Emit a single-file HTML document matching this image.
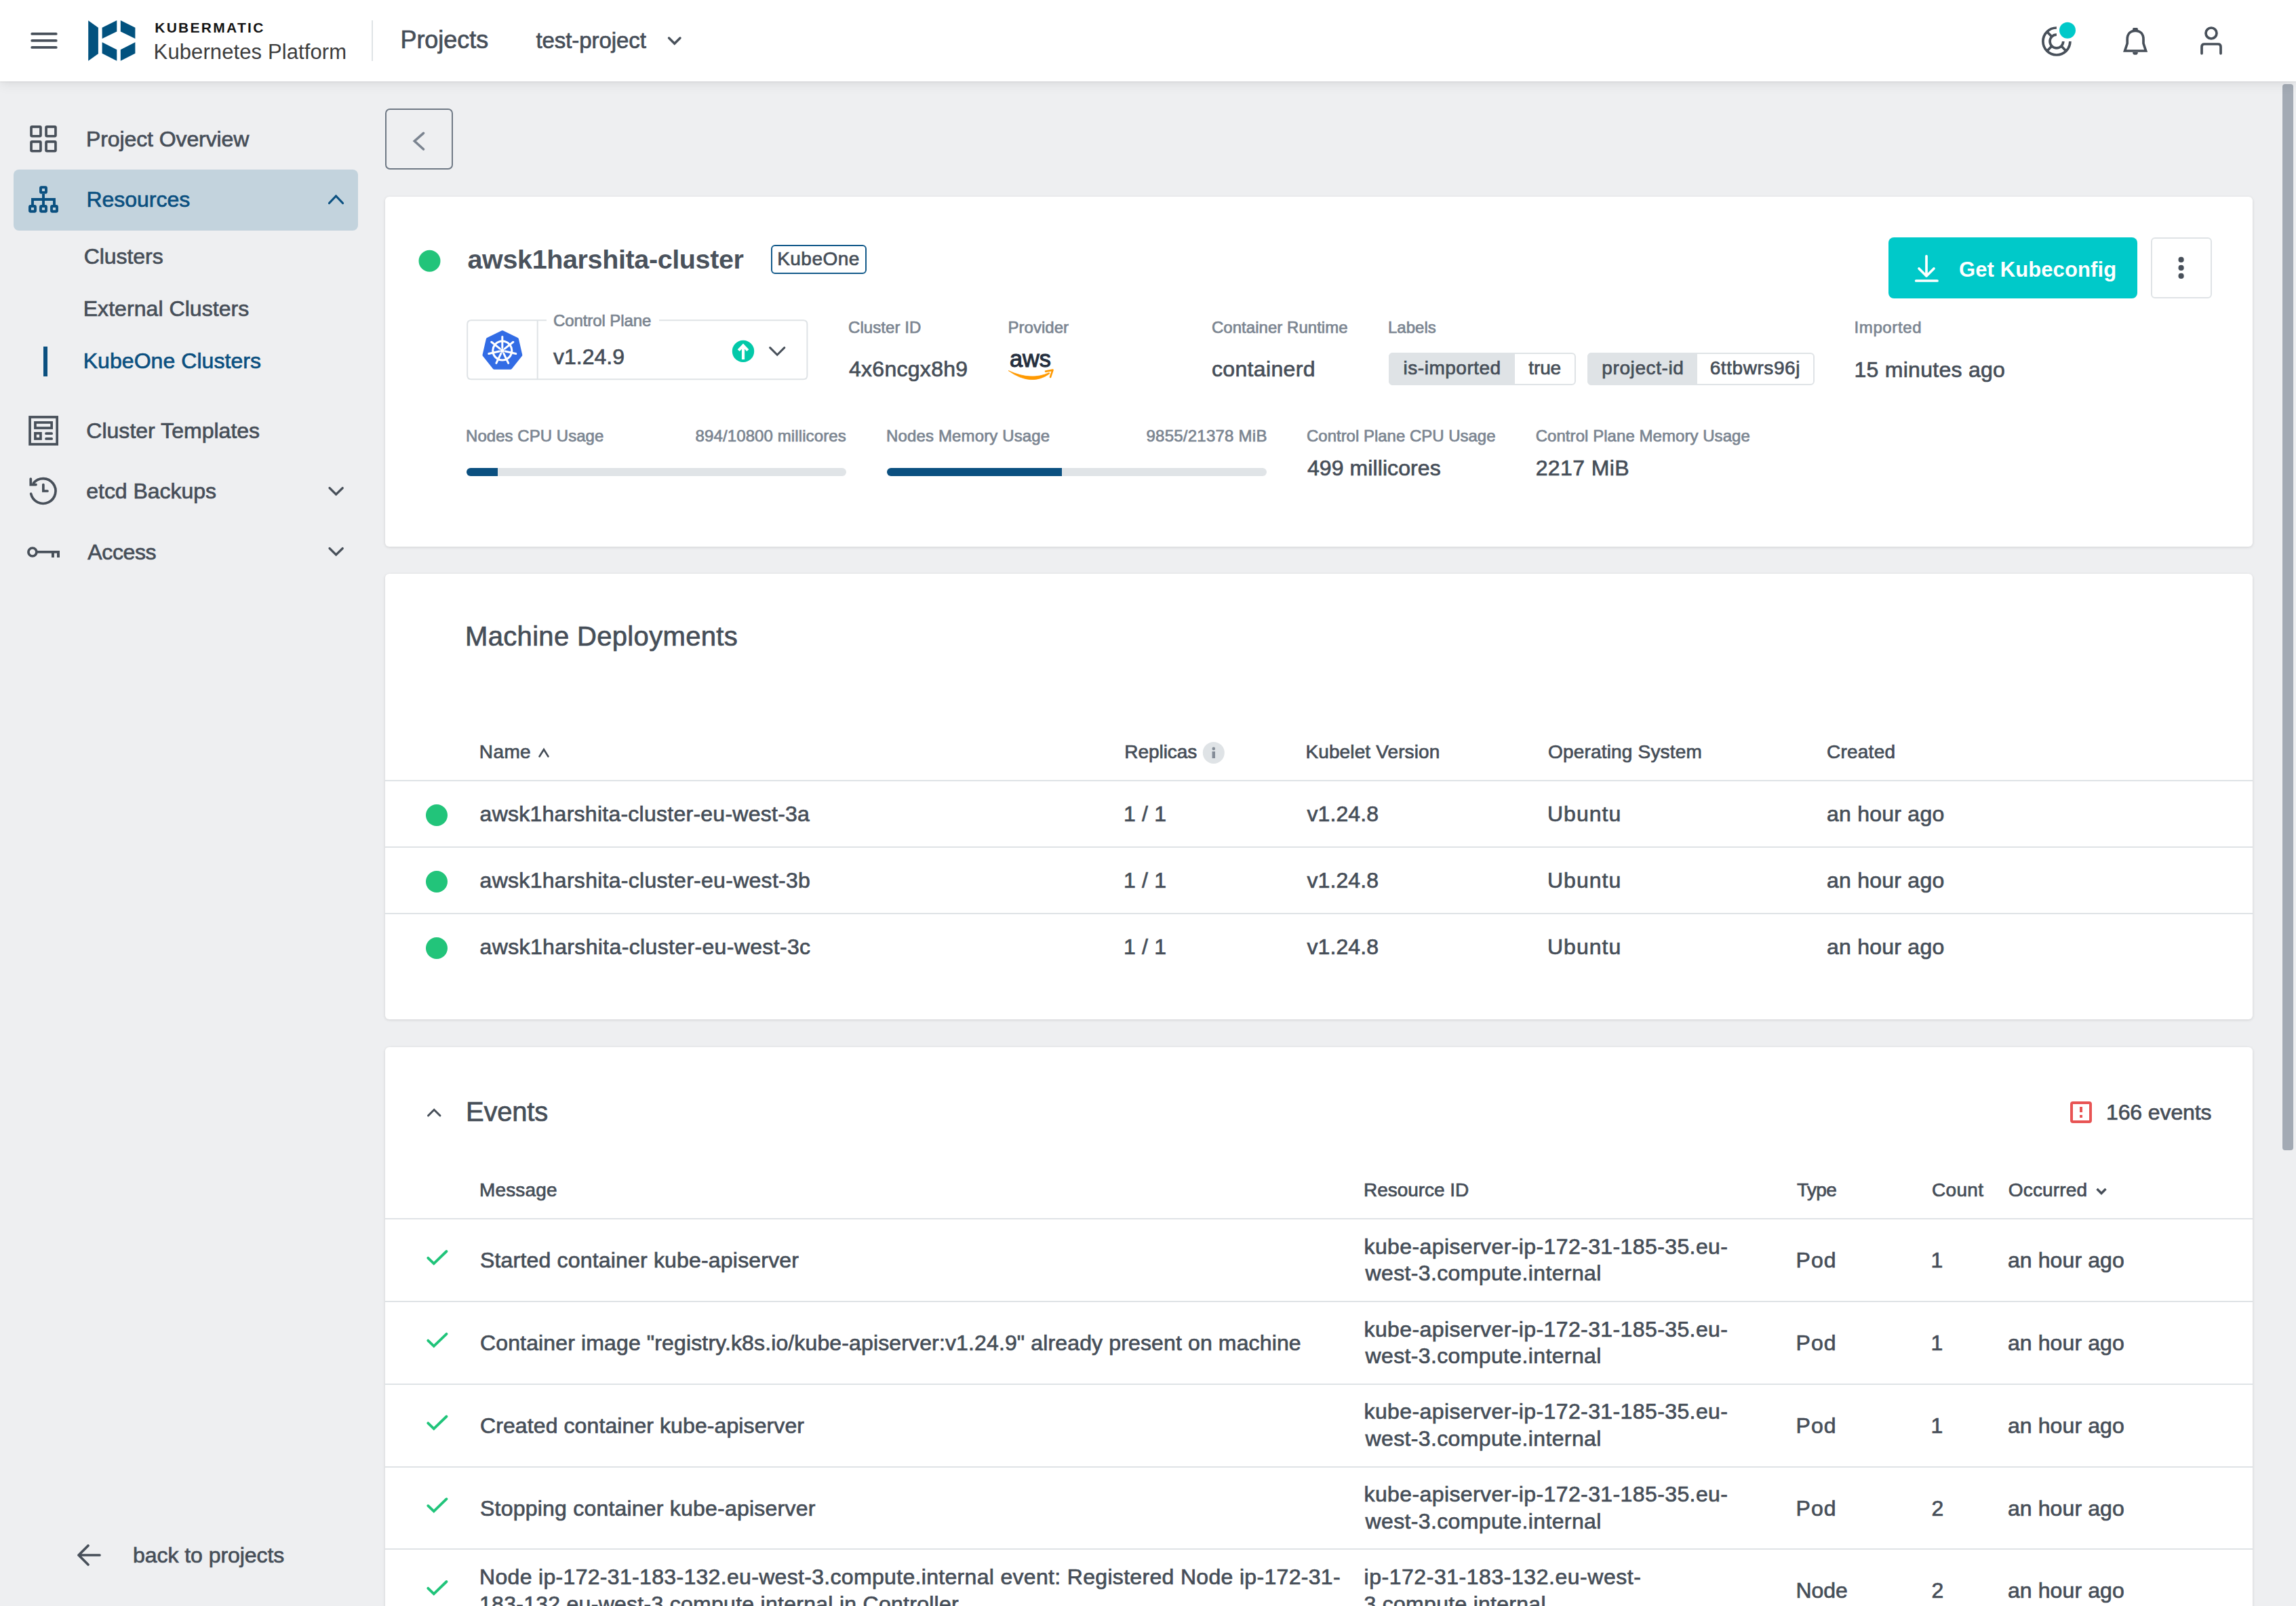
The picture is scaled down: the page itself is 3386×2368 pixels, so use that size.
<!DOCTYPE html>
<html><head><meta charset="utf-8"><title>KubeOne Cluster</title>
<style>
html,body{margin:0;padding:0;width:3386px;height:2368px;overflow:hidden;background:#eeeff1;font-family:"Liberation Sans",sans-serif;position:relative}
.t{position:absolute;white-space:nowrap;z-index:3}
svg.ov{position:absolute;left:0;top:0;z-index:4}
</style></head><body>
<div style="position:absolute;left:0px;top:0px;width:3386px;height:120px;background:#fff;box-shadow:0 1px 2px rgba(0,0,0,0.06), 0 4px 16px rgba(0,0,0,0.085);z-index:2"></div>
<div style="position:absolute;left:3366px;top:124px;width:16px;height:1572px;background:#a3aab4;border-radius:4px"></div>
<div style="position:absolute;left:20px;top:250px;width:508px;height:90px;background:#c3d3dd;border-radius:8px"></div>
<div style="position:absolute;left:64px;top:511px;width:6px;height:44px;background:#0b5080"></div>
<div style="position:absolute;left:568px;top:160px;width:100px;height:90px;border:2px solid #6f7985;border-radius:7px;box-sizing:border-box"></div>
<div style="position:absolute;left:568px;top:290px;width:2754px;height:516px;background:#fff;border-radius:6px;box-shadow:0 1px 4px rgba(0,0,0,0.13)"></div>
<div style="position:absolute;left:1137px;top:361px;width:141px;height:43px;border:2.4px solid #135a8a;border-radius:6px;box-sizing:border-box"></div>
<div style="position:absolute;left:2785px;top:350px;width:367px;height:90px;background:#00c9c9;border-radius:8px"></div>
<div style="position:absolute;left:3172px;top:350px;width:90px;height:90px;border:2px solid #dfe3e6;border-radius:6px;box-sizing:border-box"></div>
<div style="position:absolute;left:2048px;top:520px;width:276px;height:48px;border:2px solid #dfe3e6;border-radius:6px;box-sizing:border-box;overflow:hidden"></div>
<div style="position:absolute;left:2048px;top:520px;width:186px;height:48px;background:#dfe3e6;border-radius:6px 0 0 6px"></div>
<div style="position:absolute;left:2341px;top:520px;width:335px;height:48px;border:2px solid #dfe3e6;border-radius:6px;box-sizing:border-box;overflow:hidden"></div>
<div style="position:absolute;left:2341px;top:520px;width:162px;height:48px;background:#dfe3e6;border-radius:6px 0 0 6px"></div>
<div style="position:absolute;left:688px;top:690px;width:560px;height:12px;background:#e0e4e7;border-radius:6px;overflow:hidden"></div>
<div style="position:absolute;left:688px;top:690px;width:46px;height:12px;background:#0b5080;border-radius:6px 0 0 6px"></div>
<div style="position:absolute;left:1308px;top:690px;width:560px;height:12px;background:#e0e4e7;border-radius:6px"></div>
<div style="position:absolute;left:1308px;top:690px;width:258px;height:12px;background:#0b5080;border-radius:6px 0 0 6px"></div>
<div style="position:absolute;left:568px;top:846px;width:2754px;height:657px;background:#fff;border-radius:6px;box-shadow:0 1px 4px rgba(0,0,0,0.13)"></div>
<div style="position:absolute;left:568px;top:1150px;width:2754px;height:2px;background:#dfe3e6"></div>
<div style="position:absolute;left:568px;top:1248px;width:2754px;height:2px;background:#dfe3e6"></div>
<div style="position:absolute;left:568px;top:1346px;width:2754px;height:2px;background:#dfe3e6"></div>
<div style="position:absolute;left:568px;top:1544px;width:2754px;height:876px;background:#fff;border-radius:6px;box-shadow:0 1px 4px rgba(0,0,0,0.13)"></div>
<div style="position:absolute;left:568px;top:1796px;width:2754px;height:2px;background:#dfe3e6"></div>
<div style="position:absolute;left:568px;top:1918px;width:2754px;height:2px;background:#dfe3e6"></div>
<div style="position:absolute;left:568px;top:2040px;width:2754px;height:2px;background:#dfe3e6"></div>
<div style="position:absolute;left:568px;top:2162px;width:2754px;height:2px;background:#dfe3e6"></div>
<div style="position:absolute;left:568px;top:2283px;width:2754px;height:2px;background:#dfe3e6"></div>
<div class="t" style="left:228.2px;top:30px;font-size:21px;line-height:21px;color:#141414;font-weight:700;letter-spacing:2.289px;-webkit-text-stroke:0 #141414;">KUBERMATIC</div>
<div class="t" style="left:226.6px;top:61px;font-size:31px;line-height:31px;color:#3c3c3c;font-weight:400;letter-spacing:0.106px;-webkit-text-stroke:0 #3c3c3c;">Kubernetes Platform</div>
<div class="t" style="left:590.4px;top:41px;font-size:36px;line-height:36px;color:#464e58;font-weight:400;letter-spacing:-0.014px;-webkit-text-stroke:0.7px #464e58;">Projects</div>
<div class="t" style="left:790.4px;top:43px;font-size:33px;line-height:33px;color:#464e58;font-weight:400;letter-spacing:-0.064px;-webkit-text-stroke:0.7px #464e58;">test-project</div>
<div class="t" style="left:127.0px;top:189px;font-size:32px;line-height:32px;color:#464e58;font-weight:400;letter-spacing:-0.100px;-webkit-text-stroke:0.7px #464e58;">Project Overview</div>
<div class="t" style="left:127.5px;top:278px;font-size:32px;line-height:32px;color:#0b5080;font-weight:400;letter-spacing:-0.038px;-webkit-text-stroke:0.7px #0b5080;">Resources</div>
<div class="t" style="left:123.7px;top:362px;font-size:32px;line-height:32px;color:#464e58;font-weight:400;letter-spacing:-0.057px;-webkit-text-stroke:0.7px #464e58;">Clusters</div>
<div class="t" style="left:122.7px;top:439px;font-size:32px;line-height:32px;color:#464e58;font-weight:400;letter-spacing:0.062px;-webkit-text-stroke:0.7px #464e58;">External Clusters</div>
<div class="t" style="left:122.7px;top:516px;font-size:32px;line-height:32px;color:#0b5080;font-weight:400;letter-spacing:0.060px;-webkit-text-stroke:0.7px #0b5080;">KubeOne Clusters</div>
<div class="t" style="left:127.3px;top:619px;font-size:32px;line-height:32px;color:#464e58;font-weight:400;letter-spacing:0.019px;-webkit-text-stroke:0.7px #464e58;">Cluster Templates</div>
<div class="t" style="left:127.3px;top:708px;font-size:32px;line-height:32px;color:#464e58;font-weight:400;letter-spacing:-0.045px;-webkit-text-stroke:0.7px #464e58;">etcd Backups</div>
<div class="t" style="left:129.3px;top:798px;font-size:32px;line-height:32px;color:#464e58;font-weight:400;letter-spacing:-0.380px;-webkit-text-stroke:0.7px #464e58;">Access</div>
<div class="t" style="left:196.0px;top:2277px;font-size:32px;line-height:32px;color:#464e58;font-weight:400;letter-spacing:-0.053px;-webkit-text-stroke:0.7px #464e58;">back to projects</div>
<div class="t" style="left:689.5px;top:363px;font-size:39.5px;line-height:39.5px;color:#4a525c;font-weight:700;letter-spacing:-0.375px;-webkit-text-stroke:0 #4a525c;">awsk1harshita-cluster</div>
<div class="t" style="left:1146.2px;top:368px;font-size:28px;line-height:28px;color:#464e58;font-weight:400;letter-spacing:0.467px;-webkit-text-stroke:0.7px #464e58;">KubeOne</div>
<div class="t" style="left:2889.0px;top:382px;font-size:31px;line-height:31px;color:#fff;font-weight:700;letter-spacing:0.100px;-webkit-text-stroke:0 #fff;">Get Kubeconfig</div>
<div class="t" style="left:816.0px;top:461px;font-size:24px;line-height:24px;color:#7b8591;font-weight:400;letter-spacing:-0.083px;-webkit-text-stroke:0.7px #7b8591;">Control Plane</div>
<div class="t" style="left:816.0px;top:510px;font-size:32px;line-height:32px;color:#464e58;font-weight:400;letter-spacing:0.000px;-webkit-text-stroke:0.7px #464e58;">v1.24.9</div>
<div class="t" style="left:1251.0px;top:471px;font-size:24px;line-height:24px;color:#7b8591;font-weight:400;letter-spacing:0.078px;-webkit-text-stroke:0.7px #7b8591;">Cluster ID</div>
<div class="t" style="left:1252.0px;top:528px;font-size:32px;line-height:32px;color:#464e58;font-weight:400;letter-spacing:0.278px;-webkit-text-stroke:0.7px #464e58;">4x6ncgx8h9</div>
<div class="t" style="left:1486.5px;top:471px;font-size:24px;line-height:24px;color:#7b8591;font-weight:400;letter-spacing:0.029px;-webkit-text-stroke:0.7px #7b8591;">Provider</div>
<div class="t" style="left:1787.0px;top:471px;font-size:24px;line-height:24px;color:#7b8591;font-weight:400;letter-spacing:0.031px;-webkit-text-stroke:0.7px #7b8591;">Container Runtime</div>
<div class="t" style="left:1787.0px;top:528px;font-size:32px;line-height:32px;color:#464e58;font-weight:400;letter-spacing:0.333px;-webkit-text-stroke:0.7px #464e58;">containerd</div>
<div class="t" style="left:2047.0px;top:471px;font-size:24px;line-height:24px;color:#7b8591;font-weight:400;letter-spacing:0.000px;-webkit-text-stroke:0.7px #7b8591;">Labels</div>
<div class="t" style="left:2069.6px;top:529px;font-size:28px;line-height:28px;color:#464e58;font-weight:400;letter-spacing:0.510px;-webkit-text-stroke:0.7px #464e58;">is-imported</div>
<div class="t" style="left:2254.3px;top:529px;font-size:28px;line-height:28px;color:#464e58;font-weight:400;letter-spacing:-0.133px;-webkit-text-stroke:0.7px #464e58;">true</div>
<div class="t" style="left:2362.3px;top:529px;font-size:28px;line-height:28px;color:#464e58;font-weight:400;letter-spacing:0.600px;-webkit-text-stroke:0.7px #464e58;">project-id</div>
<div class="t" style="left:2521.7px;top:529px;font-size:28px;line-height:28px;color:#464e58;font-weight:400;letter-spacing:0.567px;-webkit-text-stroke:0.7px #464e58;">6ttbwrs96j</div>
<div class="t" style="left:2734.5px;top:471px;font-size:24px;line-height:24px;color:#7b8591;font-weight:400;letter-spacing:0.614px;-webkit-text-stroke:0.7px #7b8591;">Imported</div>
<div class="t" style="left:2734.5px;top:529px;font-size:32px;line-height:32px;color:#464e58;font-weight:400;letter-spacing:0.269px;-webkit-text-stroke:0.7px #464e58;">15 minutes ago</div>
<div class="t" style="left:687.0px;top:631px;font-size:24px;line-height:24px;color:#7b8591;font-weight:400;letter-spacing:0.043px;-webkit-text-stroke:0.7px #7b8591;">Nodes CPU Usage</div>
<div class="t" style="left:1025.6px;top:631px;font-size:24px;line-height:24px;color:#7b8591;font-weight:400;letter-spacing:0.105px;-webkit-text-stroke:0.7px #7b8591;">894/10800 millicores</div>
<div class="t" style="left:1307.0px;top:631px;font-size:24px;line-height:24px;color:#7b8591;font-weight:400;letter-spacing:0.141px;-webkit-text-stroke:0.7px #7b8591;">Nodes Memory Usage</div>
<div class="t" style="left:1690.5px;top:631px;font-size:24px;line-height:24px;color:#7b8591;font-weight:400;letter-spacing:0.238px;-webkit-text-stroke:0.7px #7b8591;">9855/21378 MiB</div>
<div class="t" style="left:1927.0px;top:631px;font-size:24px;line-height:24px;color:#7b8591;font-weight:400;letter-spacing:-0.014px;-webkit-text-stroke:0.7px #7b8591;">Control Plane CPU Usage</div>
<div class="t" style="left:1928.0px;top:674px;font-size:32px;line-height:32px;color:#464e58;font-weight:400;letter-spacing:0.077px;-webkit-text-stroke:0.7px #464e58;">499 millicores</div>
<div class="t" style="left:2264.7px;top:631px;font-size:24px;line-height:24px;color:#7b8591;font-weight:400;letter-spacing:0.052px;-webkit-text-stroke:0.7px #7b8591;">Control Plane Memory Usage</div>
<div class="t" style="left:2264.7px;top:674px;font-size:32px;line-height:32px;color:#464e58;font-weight:400;letter-spacing:0.386px;-webkit-text-stroke:0.7px #464e58;">2217 MiB</div>
<div class="t" style="left:686.0px;top:918px;font-size:40px;line-height:40px;color:#464e58;font-weight:400;letter-spacing:0.333px;-webkit-text-stroke:0.7px #464e58;">Machine Deployments</div>
<div class="t" style="left:706.8px;top:1095px;font-size:28px;line-height:28px;color:#464e58;font-weight:400;letter-spacing:0.400px;-webkit-text-stroke:0.7px #464e58;">Name</div>
<div class="t" style="left:1658.2px;top:1095px;font-size:28px;line-height:28px;color:#464e58;font-weight:400;letter-spacing:-0.029px;-webkit-text-stroke:0.7px #464e58;">Replicas</div>
<div class="t" style="left:1925.4px;top:1095px;font-size:28px;line-height:28px;color:#464e58;font-weight:400;letter-spacing:0.129px;-webkit-text-stroke:0.7px #464e58;">Kubelet Version</div>
<div class="t" style="left:2283.0px;top:1095px;font-size:28px;line-height:28px;color:#464e58;font-weight:400;letter-spacing:0.180px;-webkit-text-stroke:0.7px #464e58;">Operating System</div>
<div class="t" style="left:2694.0px;top:1095px;font-size:28px;line-height:28px;color:#464e58;font-weight:400;letter-spacing:0.233px;-webkit-text-stroke:0.7px #464e58;">Created</div>
<div class="t" style="left:707.6px;top:1184px;font-size:32px;line-height:32px;color:#464e58;font-weight:400;letter-spacing:0.255px;-webkit-text-stroke:0.7px #464e58;">awsk1harshita-cluster-eu-west-3a</div>
<div class="t" style="left:1657.0px;top:1184px;font-size:32px;line-height:32px;color:#464e58;font-weight:400;letter-spacing:0.175px;-webkit-text-stroke:0.7px #464e58;">1 / 1</div>
<div class="t" style="left:1927.4px;top:1184px;font-size:32px;line-height:32px;color:#464e58;font-weight:400;letter-spacing:0.100px;-webkit-text-stroke:0.7px #464e58;">v1.24.8</div>
<div class="t" style="left:2282.0px;top:1184px;font-size:32px;line-height:32px;color:#464e58;font-weight:400;letter-spacing:1.000px;-webkit-text-stroke:0.7px #464e58;">Ubuntu</div>
<div class="t" style="left:2694.0px;top:1184px;font-size:32px;line-height:32px;color:#464e58;font-weight:400;letter-spacing:0.240px;-webkit-text-stroke:0.7px #464e58;">an hour ago</div>
<div class="t" style="left:707.6px;top:1282px;font-size:32px;line-height:32px;color:#464e58;font-weight:400;letter-spacing:0.287px;-webkit-text-stroke:0.7px #464e58;">awsk1harshita-cluster-eu-west-3b</div>
<div class="t" style="left:1657.0px;top:1282px;font-size:32px;line-height:32px;color:#464e58;font-weight:400;letter-spacing:0.175px;-webkit-text-stroke:0.7px #464e58;">1 / 1</div>
<div class="t" style="left:1927.4px;top:1282px;font-size:32px;line-height:32px;color:#464e58;font-weight:400;letter-spacing:0.100px;-webkit-text-stroke:0.7px #464e58;">v1.24.8</div>
<div class="t" style="left:2282.0px;top:1282px;font-size:32px;line-height:32px;color:#464e58;font-weight:400;letter-spacing:1.000px;-webkit-text-stroke:0.7px #464e58;">Ubuntu</div>
<div class="t" style="left:2694.0px;top:1282px;font-size:32px;line-height:32px;color:#464e58;font-weight:400;letter-spacing:0.240px;-webkit-text-stroke:0.7px #464e58;">an hour ago</div>
<div class="t" style="left:707.6px;top:1380px;font-size:32px;line-height:32px;color:#464e58;font-weight:400;letter-spacing:0.352px;-webkit-text-stroke:0.7px #464e58;">awsk1harshita-cluster-eu-west-3c</div>
<div class="t" style="left:1657.0px;top:1380px;font-size:32px;line-height:32px;color:#464e58;font-weight:400;letter-spacing:0.175px;-webkit-text-stroke:0.7px #464e58;">1 / 1</div>
<div class="t" style="left:1927.4px;top:1380px;font-size:32px;line-height:32px;color:#464e58;font-weight:400;letter-spacing:0.100px;-webkit-text-stroke:0.7px #464e58;">v1.24.8</div>
<div class="t" style="left:2282.0px;top:1380px;font-size:32px;line-height:32px;color:#464e58;font-weight:400;letter-spacing:1.000px;-webkit-text-stroke:0.7px #464e58;">Ubuntu</div>
<div class="t" style="left:2694.0px;top:1380px;font-size:32px;line-height:32px;color:#464e58;font-weight:400;letter-spacing:0.240px;-webkit-text-stroke:0.7px #464e58;">an hour ago</div>
<div class="t" style="left:687.0px;top:1619px;font-size:40px;line-height:40px;color:#464e58;font-weight:400;letter-spacing:-0.200px;-webkit-text-stroke:0.7px #464e58;">Events</div>
<div class="t" style="left:3106.0px;top:1624px;font-size:32px;line-height:32px;color:#464e58;font-weight:400;letter-spacing:-0.111px;-webkit-text-stroke:0.7px #464e58;">166 events</div>
<div class="t" style="left:707.0px;top:1741px;font-size:28px;line-height:28px;color:#464e58;font-weight:400;letter-spacing:0.150px;-webkit-text-stroke:0.7px #464e58;">Message</div>
<div class="t" style="left:2011.0px;top:1741px;font-size:28px;line-height:28px;color:#464e58;font-weight:400;letter-spacing:-0.050px;-webkit-text-stroke:0.7px #464e58;">Resource ID</div>
<div class="t" style="left:2650.0px;top:1741px;font-size:28px;line-height:28px;color:#464e58;font-weight:400;letter-spacing:-0.667px;-webkit-text-stroke:0.7px #464e58;">Type</div>
<div class="t" style="left:2849.0px;top:1741px;font-size:28px;line-height:28px;color:#464e58;font-weight:400;letter-spacing:0.325px;-webkit-text-stroke:0.7px #464e58;">Count</div>
<div class="t" style="left:2961.8px;top:1741px;font-size:28px;line-height:28px;color:#464e58;font-weight:400;letter-spacing:0.171px;-webkit-text-stroke:0.7px #464e58;">Occurred</div>
<div class="t" style="left:708.0px;top:1842px;font-size:32px;line-height:32px;color:#464e58;font-weight:400;letter-spacing:0.184px;-webkit-text-stroke:0.7px #464e58;">Started container kube-apiserver</div>
<div class="t" style="left:2011.5px;top:1822px;font-size:32px;line-height:32px;color:#464e58;font-weight:400;letter-spacing:0.397px;-webkit-text-stroke:0.7px #464e58;">kube-apiserver-ip-172-31-185-35.eu-</div>
<div class="t" style="left:2013.5px;top:1861px;font-size:32px;line-height:32px;color:#464e58;font-weight:400;letter-spacing:0.368px;-webkit-text-stroke:0.7px #464e58;">west-3.compute.internal</div>
<div class="t" style="left:2648.4px;top:1842px;font-size:32px;line-height:32px;color:#464e58;font-weight:400;letter-spacing:1.150px;-webkit-text-stroke:0.7px #464e58;">Pod</div>
<div class="t" style="left:2847.5px;top:1842px;font-size:32px;line-height:32px;color:#464e58;font-weight:400;letter-spacing:0.000px;-webkit-text-stroke:0.7px #464e58;">1</div>
<div class="t" style="left:2960.9px;top:1842px;font-size:32px;line-height:32px;color:#464e58;font-weight:400;letter-spacing:0.110px;-webkit-text-stroke:0.7px #464e58;">an hour ago</div>
<div class="t" style="left:708.0px;top:1964px;font-size:32px;line-height:32px;color:#464e58;font-weight:400;letter-spacing:0.134px;-webkit-text-stroke:0.7px #464e58;">Container image "registry.k8s.io/kube-apiserver:v1.24.9" already present on machine</div>
<div class="t" style="left:2011.5px;top:1944px;font-size:32px;line-height:32px;color:#464e58;font-weight:400;letter-spacing:0.397px;-webkit-text-stroke:0.7px #464e58;">kube-apiserver-ip-172-31-185-35.eu-</div>
<div class="t" style="left:2013.5px;top:1983px;font-size:32px;line-height:32px;color:#464e58;font-weight:400;letter-spacing:0.368px;-webkit-text-stroke:0.7px #464e58;">west-3.compute.internal</div>
<div class="t" style="left:2648.4px;top:1964px;font-size:32px;line-height:32px;color:#464e58;font-weight:400;letter-spacing:1.150px;-webkit-text-stroke:0.7px #464e58;">Pod</div>
<div class="t" style="left:2847.5px;top:1964px;font-size:32px;line-height:32px;color:#464e58;font-weight:400;letter-spacing:0.000px;-webkit-text-stroke:0.7px #464e58;">1</div>
<div class="t" style="left:2960.9px;top:1964px;font-size:32px;line-height:32px;color:#464e58;font-weight:400;letter-spacing:0.110px;-webkit-text-stroke:0.7px #464e58;">an hour ago</div>
<div class="t" style="left:708.0px;top:2086px;font-size:32px;line-height:32px;color:#464e58;font-weight:400;letter-spacing:0.097px;-webkit-text-stroke:0.7px #464e58;">Created container kube-apiserver</div>
<div class="t" style="left:2011.5px;top:2065px;font-size:32px;line-height:32px;color:#464e58;font-weight:400;letter-spacing:0.397px;-webkit-text-stroke:0.7px #464e58;">kube-apiserver-ip-172-31-185-35.eu-</div>
<div class="t" style="left:2013.5px;top:2105px;font-size:32px;line-height:32px;color:#464e58;font-weight:400;letter-spacing:0.368px;-webkit-text-stroke:0.7px #464e58;">west-3.compute.internal</div>
<div class="t" style="left:2648.4px;top:2086px;font-size:32px;line-height:32px;color:#464e58;font-weight:400;letter-spacing:1.150px;-webkit-text-stroke:0.7px #464e58;">Pod</div>
<div class="t" style="left:2847.5px;top:2086px;font-size:32px;line-height:32px;color:#464e58;font-weight:400;letter-spacing:0.000px;-webkit-text-stroke:0.7px #464e58;">1</div>
<div class="t" style="left:2960.9px;top:2086px;font-size:32px;line-height:32px;color:#464e58;font-weight:400;letter-spacing:0.110px;-webkit-text-stroke:0.7px #464e58;">an hour ago</div>
<div class="t" style="left:708.0px;top:2208px;font-size:32px;line-height:32px;color:#464e58;font-weight:400;letter-spacing:0.216px;-webkit-text-stroke:0.7px #464e58;">Stopping container kube-apiserver</div>
<div class="t" style="left:2011.5px;top:2187px;font-size:32px;line-height:32px;color:#464e58;font-weight:400;letter-spacing:0.397px;-webkit-text-stroke:0.7px #464e58;">kube-apiserver-ip-172-31-185-35.eu-</div>
<div class="t" style="left:2013.5px;top:2227px;font-size:32px;line-height:32px;color:#464e58;font-weight:400;letter-spacing:0.368px;-webkit-text-stroke:0.7px #464e58;">west-3.compute.internal</div>
<div class="t" style="left:2648.4px;top:2208px;font-size:32px;line-height:32px;color:#464e58;font-weight:400;letter-spacing:1.150px;-webkit-text-stroke:0.7px #464e58;">Pod</div>
<div class="t" style="left:2848.5px;top:2208px;font-size:32px;line-height:32px;color:#464e58;font-weight:400;letter-spacing:0.000px;-webkit-text-stroke:0.7px #464e58;">2</div>
<div class="t" style="left:2960.9px;top:2208px;font-size:32px;line-height:32px;color:#464e58;font-weight:400;letter-spacing:0.110px;-webkit-text-stroke:0.7px #464e58;">an hour ago</div>
<div class="t" style="left:707.0px;top:2309px;font-size:32px;line-height:32px;color:#464e58;font-weight:400;letter-spacing:0.320px;-webkit-text-stroke:0.7px #464e58;">Node ip-172-31-183-132.eu-west-3.compute.internal event: Registered Node ip-172-31-</div>
<div class="t" style="left:707.0px;top:2349px;font-size:32px;line-height:32px;color:#464e58;font-weight:400;letter-spacing:0.277px;-webkit-text-stroke:0.7px #464e58;">183-132.eu-west-3.compute.internal in Controller</div>
<div class="t" style="left:2011.5px;top:2309px;font-size:32px;line-height:32px;color:#464e58;font-weight:400;letter-spacing:0.540px;-webkit-text-stroke:0.7px #464e58;">ip-172-31-183-132.eu-west-</div>
<div class="t" style="left:2011.5px;top:2349px;font-size:32px;line-height:32px;color:#464e58;font-weight:400;letter-spacing:0.282px;-webkit-text-stroke:0.7px #464e58;">3.compute.internal</div>
<div class="t" style="left:2648.4px;top:2329px;font-size:32px;line-height:32px;color:#464e58;font-weight:400;letter-spacing:0.000px;-webkit-text-stroke:0.7px #464e58;">Node</div>
<div class="t" style="left:2848.5px;top:2329px;font-size:32px;line-height:32px;color:#464e58;font-weight:400;letter-spacing:0.000px;-webkit-text-stroke:0.7px #464e58;">2</div>
<div class="t" style="left:2960.9px;top:2329px;font-size:32px;line-height:32px;color:#464e58;font-weight:400;letter-spacing:0.110px;-webkit-text-stroke:0.7px #464e58;">an hour ago</div>
<svg class="ov" width="3386" height="2368" viewBox="0 0 3386 2368">
<line x1="47.2" y1="49.9" x2="82.8" y2="49.9" stroke="#48505a" stroke-width="3.7" stroke-linecap="round"/>
<line x1="47.2" y1="59.9" x2="82.8" y2="59.9" stroke="#48505a" stroke-width="3.7" stroke-linecap="round"/>
<line x1="47.2" y1="69.9" x2="82.8" y2="69.9" stroke="#48505a" stroke-width="3.7" stroke-linecap="round"/>
<polygon points="130.2,30.2 144.9,40.7 144.9,79.3 130.2,89.7" fill="#02527f"/>
<polygon points="150.6,40.7 172.3,30 172.3,46.4 150.6,56.9" fill="#02527f"/>
<polygon points="177.8,30 199.4,40.7 199.4,56.9 177.8,46.4" fill="#02527f"/>
<polygon points="150.6,62.3 172.3,73.3 172.3,89.7 150.6,78.8" fill="#02527f"/>
<polygon points="177.8,73.3 199.4,62.3 199.4,78.8 177.8,89.7" fill="#02527f"/>
<rect x="548" y="30" width="2" height="60" fill="#dfe3e6"/>
<polyline points="986.5,56 994.75,64.25 1003,56" fill="none" stroke="#48505a" stroke-width="3.4" stroke-linecap="round"/>
<path d="M 3052.9 61 A 20 20 0 1 1 3032.9 41" fill="none" stroke="#48505a" stroke-width="3.7"/>
<path d="M 3042.75 61 A 9.85 9.85 0 1 1 3032.9 51.15" fill="none" stroke="#48505a" stroke-width="3.7"/>
<line x1="3025.12" y1="68.78" x2="3019.46" y2="74.44" stroke="#48505a" stroke-width="3.7"/>
<line x1="3025.12" y1="53.22" x2="3019.46" y2="47.56" stroke="#48505a" stroke-width="3.7"/>
<line x1="3040.68" y1="68.78" x2="3046.34" y2="74.44" stroke="#48505a" stroke-width="3.7"/>
<circle cx="3049" cy="44.8" r="12" fill="#00c9c9"/>
<path d="M 3137.2 58 C 3137.2 50 3142 45.3 3149.1 45.3 C 3156.2 45.3 3161 50 3161 58 L 3161 64 L 3164.6 75 L 3133.6 75 L 3137.2 64 Z" fill="none" stroke="#48505a" stroke-width="3.7" stroke-linejoin="miter"/>
<rect x="3145.1" y="41.1" width="7.8" height="4" rx="1.5" fill="#48505a"/>
<path d="M 3145.1 76.9 A 3.9 3.9 0 0 0 3152.9 76.9 Z" fill="#48505a"/>
<circle cx="3261" cy="49" r="8" fill="none" stroke="#48505a" stroke-width="3.7"/>
<path d="M 3247 78.8 L 3247 69 Q 3247 65 3251 65 L 3271 65 Q 3275 65 3275 69 L 3275 78.8" fill="none" stroke="#48505a" stroke-width="3.7" stroke-linecap="round"/>
<rect x="46.05" y="186.85" width="13.9" height="13.9" rx="1.2" fill="none" stroke="#48505a" stroke-width="3.7"/>
<rect x="68.05" y="186.85" width="13.9" height="13.9" rx="1.2" fill="none" stroke="#48505a" stroke-width="3.7"/>
<rect x="46.05" y="208.85" width="13.9" height="13.9" rx="1.2" fill="none" stroke="#48505a" stroke-width="3.7"/>
<rect x="68.05" y="208.85" width="13.9" height="13.9" rx="1.2" fill="none" stroke="#48505a" stroke-width="3.7"/>
<rect x="60" y="276.1" width="8" height="7.8" rx="1.2" fill="none" stroke="#0b5080" stroke-width="3.9"/>
<rect x="44" y="304" width="8" height="7.8" rx="1.2" fill="none" stroke="#0b5080" stroke-width="3.9"/>
<rect x="60" y="304" width="8" height="7.8" rx="1.2" fill="none" stroke="#0b5080" stroke-width="3.9"/>
<rect x="76" y="304" width="8" height="7.8" rx="1.2" fill="none" stroke="#0b5080" stroke-width="3.9"/>
<path d="M 64 285.7 V 302 M 48 302 V 294 H 80 V 302" fill="none" stroke="#0b5080" stroke-width="3.9"/>
<polyline points="485.5,299.5 495.5,289 505.5,299.5" fill="none" stroke="#0b5080" stroke-width="3.2" stroke-linecap="round"/>
<rect x="44.05" y="614.95" width="40.1" height="40.1" fill="none" stroke="#48505a" stroke-width="3.7"/>
<rect x="51.95" y="622.95" width="24.2" height="8.1" fill="none" stroke="#48505a" stroke-width="3.7"/>
<rect x="51.95" y="638.85" width="8" height="8.1" fill="none" stroke="#48505a" stroke-width="3.7"/>
<path d="M 68 639.15 H 76.2 M 68 646.95 H 76.2" fill="none" stroke="#48505a" stroke-width="3.7" stroke-linecap="round"/>
<path d="M 45.67 728.14 A 18.4 18.4 0 1 0 49.50 712.17" fill="none" stroke="#48505a" stroke-width="3.7" stroke-linecap="round"/>
<path d="M 45.3 706 V 714.6 H 53" fill="none" stroke="#48505a" stroke-width="3.7" stroke-linecap="round"/>
<path d="M 63.85 714.5 V 724 H 70" fill="none" stroke="#48505a" stroke-width="3.7" stroke-linecap="round"/>
<polyline points="486,719.5 495.6,729 505.3,719.5" fill="none" stroke="#48505a" stroke-width="3.2" stroke-linecap="round"/>
<circle cx="47.9" cy="814" r="6" fill="none" stroke="#48505a" stroke-width="3.7"/>
<rect x="55" y="812" width="33" height="3.7" fill="#48505a"/>
<rect x="76" y="815" width="3.9" height="7" fill="#48505a"/>
<rect x="84" y="815" width="4" height="7" fill="#48505a"/>
<polyline points="486,808.5 495.6,818 505.3,808.5" fill="none" stroke="#48505a" stroke-width="3.2" stroke-linecap="round"/>
<path d="M 147 2293 H 116 M 130 2279 L 116 2293 L 130 2307" fill="none" stroke="#48505a" stroke-width="3.7" stroke-linecap="round" stroke-linejoin="round"/>
<polyline points="624.5,196.3 611.3,208 624.5,220" fill="none" stroke="#7b8490" stroke-width="3.6" stroke-linecap="round"/>
<circle cx="633.5" cy="384.8" r="16" fill="#22c47a"/>
<path d="M 2841 377.5 V 407 M 2830 396 L 2841 407 L 2852 396" fill="none" stroke="#fff" stroke-width="3.7" stroke-linecap="round" stroke-linejoin="round"/>
<line x1="2825.7" y1="414" x2="2857" y2="414" stroke="#fff" stroke-width="3.7" stroke-linecap="round"/>
<circle cx="3216.6" cy="382.9" r="4.1" fill="#48505a"/>
<circle cx="3216.6" cy="394.9" r="4.1" fill="#48505a"/>
<circle cx="3216.6" cy="406.9" r="4.1" fill="#48505a"/>
<path d="M 806 472.3 H 695 Q 689.2 472.3 689.2 478 V 553.5 Q 689.2 559.3 695 559.3 H 1184.5 Q 1190.4 559.3 1190.4 553.5 V 478 Q 1190.4 472.3 1184.5 472.3 H 972" fill="none" stroke="#dfe3e6" stroke-width="2"/>
<rect x="791.7" y="472.3" width="2" height="87" fill="#dfe3e6"/>
<polygon points="740.90,489.80 762.48,500.19 767.81,523.54 752.88,542.27 728.92,542.27 713.99,523.54 719.32,500.19" fill="#326ce5" stroke="#326ce5" stroke-width="5" stroke-linejoin="round"/>
<circle cx="740.8" cy="517" r="14" fill="none" stroke="#fff" stroke-width="3.1"/>
<circle cx="740.8" cy="517" r="3" fill="#fff"/>
<line x1="740.80" y1="512.50" x2="740.80" y2="496.50" stroke="#fff" stroke-width="3.0" stroke-linecap="round"/>
<line x1="744.32" y1="514.19" x2="756.83" y2="504.22" stroke="#fff" stroke-width="3.0" stroke-linecap="round"/>
<line x1="745.19" y1="518.00" x2="760.79" y2="521.56" stroke="#fff" stroke-width="3.0" stroke-linecap="round"/>
<line x1="742.75" y1="521.05" x2="749.69" y2="535.47" stroke="#fff" stroke-width="3.0" stroke-linecap="round"/>
<line x1="738.85" y1="521.05" x2="731.91" y2="535.47" stroke="#fff" stroke-width="3.0" stroke-linecap="round"/>
<line x1="736.41" y1="518.00" x2="720.81" y2="521.56" stroke="#fff" stroke-width="3.0" stroke-linecap="round"/>
<line x1="737.28" y1="514.19" x2="724.77" y2="504.22" stroke="#fff" stroke-width="3.0" stroke-linecap="round"/>
<circle cx="1096" cy="517.9" r="16.2" fill="#03c9a9"/>
<path d="M 1096 530 V 511 M 1089.2 516.6 L 1096 509.6 L 1102.8 516.6" fill="none" stroke="#fff" stroke-width="4.2" stroke-linejoin="miter"/>
<polyline points="1135.6,512.6 1146.2,523.2 1156.8,512.6" fill="none" stroke="#48505a" stroke-width="3" stroke-linecap="round" stroke-linejoin="miter"/>
<text x="1489" y="540.5" font-family="Liberation Sans" font-size="35" fill="#252f3e" stroke="#252f3e" stroke-width="1.1" textLength="61" lengthAdjust="spacingAndGlyphs">aws</text>
<path d="M 1487.2 546.5 Q 1520.5 570.45 1547.8 551 L 1547.3 549.5 Q 1520.75 562 1487.2 546.5 Z" fill="#ff9900" stroke="#ff9900" stroke-width="0.8" stroke-linejoin="round"/>
<polyline points="1542,547.6 1552.5,545.6 1549,556" fill="none" stroke="#ff9900" stroke-width="2.6" stroke-linecap="round" stroke-linejoin="round"/>
<polyline points="795.5,1115.5 802,1105 808.5,1115.5" fill="none" stroke="#464e58" stroke-width="2.6" stroke-linecap="round"/>
<circle cx="1789.8" cy="1109.9" r="16" fill="#dfe3e6"/>
<circle cx="1789.8" cy="1103.9" r="2.3" fill="#838b96"/>
<rect x="1787.6" y="1108" width="4.4" height="10" fill="#838b96"/>
<circle cx="644" cy="1202" r="16" fill="#22c47a"/>
<circle cx="644" cy="1300" r="16" fill="#22c47a"/>
<circle cx="644" cy="1398" r="16" fill="#22c47a"/>
<polyline points="631.5,1645 640.2,1636.3 649,1645" fill="none" stroke="#464e58" stroke-width="3" stroke-linecap="round"/>
<rect x="3055" y="1626" width="28" height="28" rx="2" fill="none" stroke="#e85454" stroke-width="4"/>
<rect x="3067" y="1632" width="4" height="8" fill="#e85454"/>
<rect x="3067" y="1644" width="4" height="4" fill="#e85454"/>
<polyline points="3092.5,1753 3099,1759.5 3105.5,1753" fill="none" stroke="#464e58" stroke-width="3.4"/>
<polyline points="631.3,1854.9 639.8,1863.1 658.5,1845.0" fill="none" stroke="#20c47a" stroke-width="3.9" stroke-linecap="round"/>
<polyline points="631.3,1976.6 639.8,1984.8 658.5,1966.8" fill="none" stroke="#20c47a" stroke-width="3.9" stroke-linecap="round"/>
<polyline points="631.3,2098.4 639.8,2106.6 658.5,2088.5" fill="none" stroke="#20c47a" stroke-width="3.9" stroke-linecap="round"/>
<polyline points="631.3,2220.2 639.8,2228.4 658.5,2210.2" fill="none" stroke="#20c47a" stroke-width="3.9" stroke-linecap="round"/>
<polyline points="631.3,2341.9 639.8,2350.1 658.5,2332.0" fill="none" stroke="#20c47a" stroke-width="3.9" stroke-linecap="round"/>
</svg>
</body></html>
